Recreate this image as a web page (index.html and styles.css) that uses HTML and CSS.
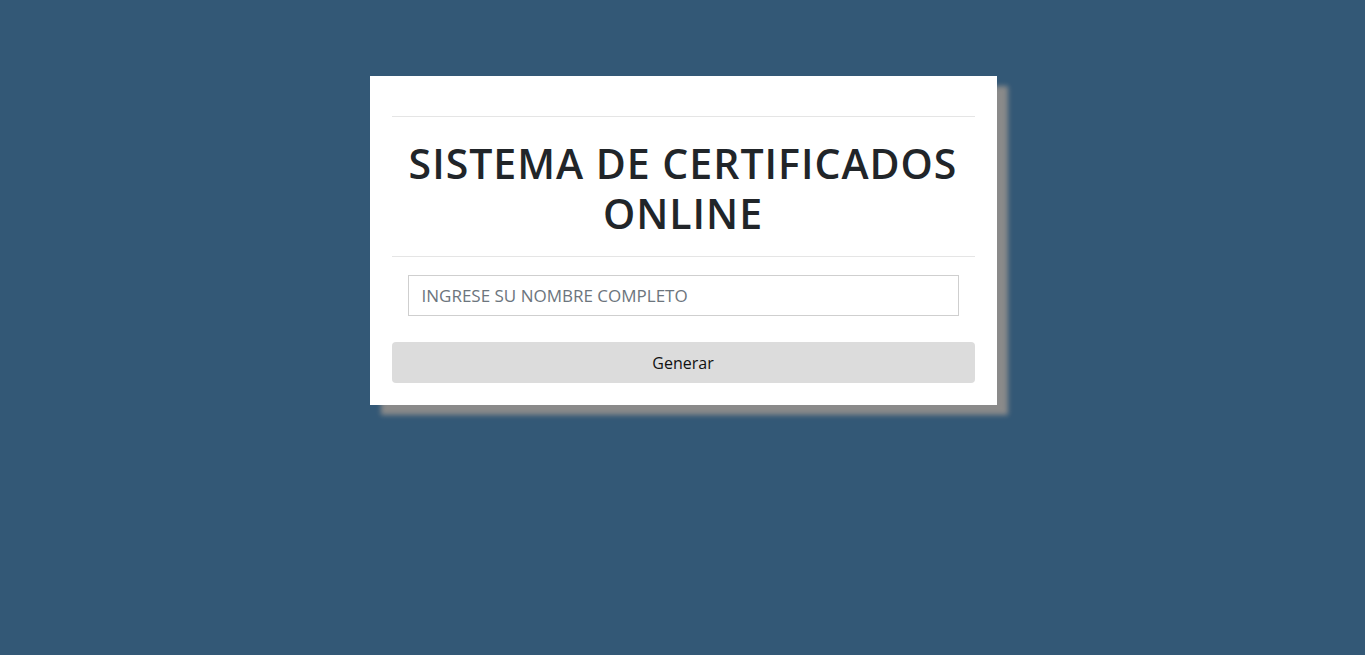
FILE: index.html
```html
<!DOCTYPE html>
<html lang="es">
<head>
<meta charset="utf-8">
<title>Sistema de Certificados Online</title>
<link rel="stylesheet" href="styles.css">
</head>
<body>
<main class="page">
  <section class="card">
    <hr class="rule">
    <h1 class="title">SISTEMA DE CERTIFICADOS ONLINE</h1>
    <hr class="rule">
    <form class="form">
      <div class="field">
        <input class="input" type="text" placeholder="INGRESE SU NOMBRE COMPLETO">
      </div>
      <button class="btn" type="button">Generar</button>
    </form>
  </section>
</main>
</body>
</html>
```

FILE: styles.css
```css
* { box-sizing: border-box; }
html, body { margin: 0; padding: 0; }
body {
  background: #335876;
  font-family: "Open Sans", "Noto Sans", sans-serif;
  height: 655px;
}
.page {
  display: flex;
  justify-content: center;
  padding-top: 76px;
  padding-left: 1px;
}
.card {
  width: 627px;
  background: #fff;
  padding: 40px 22px 22px;
  box-shadow: 11px 10px 5px #8a8a8a;
}
.rule {
  border: 0;
  border-top: 1px solid #e5e5e5;
  margin: 0;
}
.title {
  margin: 21px 0 18px;
  text-align: center;
  font-size: 41px;
  letter-spacing: 1px;
  line-height: 50px;
  font-weight: 600;
  color: #212529;
}
.form {
  display: flex;
  flex-direction: column;
  padding-top: 18px;
}
.field {
  padding: 0 16px;
}
.input {
  display: block;
  width: 100%;
  height: 41px;
  border: 1px solid #cfcfcf;
  padding: 0 13px;
  font-family: inherit;
  font-size: 17px;
  color: #495057;
  outline: none;
}
.input::placeholder { color: #6c757d; }
.btn {
  margin-top: 26px;
  height: 41px;
  border: 0;
  border-radius: 4px;
  background: #dcdcdc;
  font-family: inherit;
  font-size: 16px;
  color: #111;
}
```
